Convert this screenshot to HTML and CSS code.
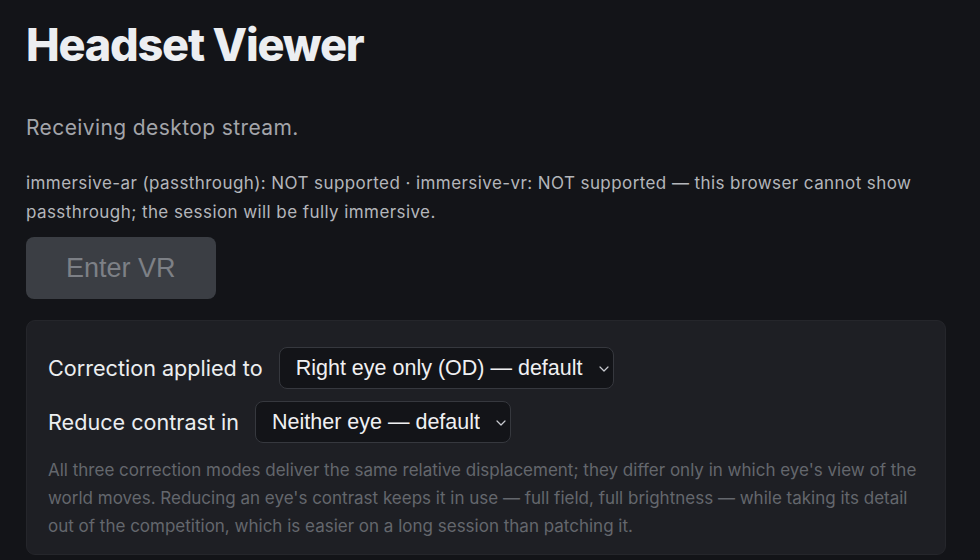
FILE: index.html
```html
<!DOCTYPE html>
<html lang="en">
<head>
<meta charset="utf-8">
<title>Headset Viewer</title>
<link rel="stylesheet" href="styles.css">
</head>
<body>
<main class="page">
  <h1 class="title">Headset Viewer</h1>
  <p class="status">Receiving desktop stream.</p>
  <p class="support">immersive-ar (passthrough): NOT supported · immersive-vr: NOT supported — this browser cannot show passthrough; the session will be fully immersive.</p>
  <button class="enter-btn" disabled>Enter VR</button>
  <section class="panel">
    <div class="row">
      <label class="row-label" for="corr">Correction applied to</label>
      <span class="select-wrap">
        <select id="corr" class="select">
          <option>Right eye only (OD) — default</option>
          <option>Left eye only (OS)</option>
          <option>Both eyes, split</option>
        </select>
        <svg class="chev" viewBox="0 0 10 6" width="10" height="6"><path d="M1 1 L5 5 L9 1" fill="none" stroke="currentColor" stroke-width="1.2" stroke-linecap="round" stroke-linejoin="round"/></svg>
      </span>
    </div>
    <div class="row">
      <label class="row-label" for="contrast">Reduce contrast in</label>
      <span class="select-wrap">
        <select id="contrast" class="select">
          <option>Neither eye — default</option>
          <option>Right eye (OD)</option>
          <option>Left eye (OS)</option>
        </select>
        <svg class="chev" viewBox="0 0 10 6" width="10" height="6"><path d="M1 1 L5 5 L9 1" fill="none" stroke="currentColor" stroke-width="1.2" stroke-linecap="round" stroke-linejoin="round"/></svg>
      </span>
    </div>
    <p class="hint">All three correction modes deliver the same relative displacement; they differ only in which eye's view of the world moves. Reducing an eye's contrast keeps it in use — full field, full brightness — while taking its detail out of the competition, which is easier on a long session than patching it.</p>
  </section>
</main>
</body>
</html>
```

FILE: styles.css
```css
html, body {
  margin: 0;
  padding: 0;
  background: #131418;
}

body {
  font-family: Inter, "Noto Sans", "DejaVu Sans", sans-serif;
  color: #b4b6bb;
}

.page {
  width: 920px;
  margin-left: 26px;
  display: flex;
  flex-direction: column;
  align-items: flex-start;
}

.title {
  margin: 17px 0 41px;
  font-size: 45px;
  line-height: 56px;
  font-weight: 800;
  color: #eceef1;
  letter-spacing: -1.2px;
}

.status {
  margin: 0;
  font-size: 21px;
  line-height: 28px;
  color: #a3a5aa;
  letter-spacing: 0.4px;
}

.support {
  margin: 27px 0 0;
  font-size: 17px;
  line-height: 29px;
  color: #b4b6bb;
  letter-spacing: 0.42px;
}

.enter-btn {
  margin-top: 10px;
  height: 62px;
  padding: 0 40px;
  border: none;
  border-radius: 8px;
  background: #3b3e44;
  color: #7d8086;
  font-family: "Liberation Sans", Arial, sans-serif;
  font-size: 27px;
}

.panel {
  align-self: stretch;
  margin-top: 21px;
  padding: 26px 21px 14px;
  background: #1e1f24;
  border: 1px solid #25262b;
  border-radius: 9px;
  display: flex;
  flex-direction: column;
  gap: 12px;
}

.row {
  display: flex;
  align-items: center;
  gap: 16px;
}

.row-label {
  font-size: 21.6px;
  color: #eceef0;
}

.select-wrap {
  position: relative;
  display: inline-flex;
}

.select {
  appearance: none;
  -webkit-appearance: none;
  height: 42px;
  padding: 0 30px 0 16px;
  background: #131418;
  border: 1px solid #36383e;
  border-radius: 8px;
  color: #f0f0f2;
  font-family: "Liberation Sans", Arial, sans-serif;
  font-size: 21.5px;
}

.chev {
  position: absolute;
  right: 5px;
  top: 19px;
  color: #c8cacf;
  pointer-events: none;
}

.hint {
  margin: 1px 0 0;
  font-size: 17px;
  line-height: 28px;
  color: #64676d;
}
```
